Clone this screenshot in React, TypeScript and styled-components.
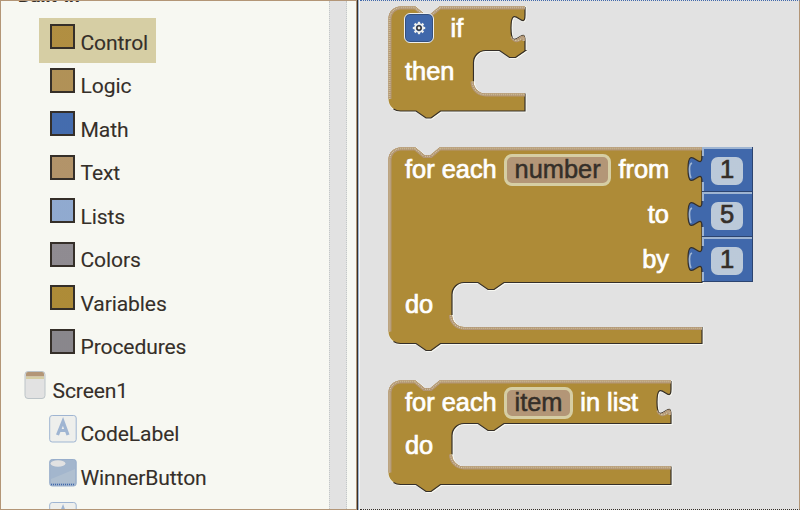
import React from "react";
import styled, { createGlobalStyle } from "styled-components";

const GOLD = "#ae8b37";
const DARK = "#352f29";
const BLUE = "#4068ab";
const SKY = "#9fb5d2";
const TAN = "#b39677";
const KHAKI = "#d6cea4";
const PAPER = "#f7f8f2";
const GREY = "#e2e2e2";

const Global = createGlobalStyle`
  body { margin: 0; overflow: hidden; }
  * { box-sizing: border-box; }
`;

const Shell = styled.div`
  width: 800px;
  height: 510px;
  display: flex;
  overflow: hidden;
  background: ${PAPER};
`;

const Sidebar = styled.aside`
  width: 329px;
  height: 510px;
  overflow: hidden;
  border: 1px solid ${TAN};
  border-right: 0;
  background: ${PAPER};
`;

const Tree = styled.ul`
  list-style: none;
  margin: -27px 0 0;
  padding: 0;
`;

const Item = styled.li<{ $level: number; $selected?: boolean }>`
  display: flex;
  align-items: flex-start;
  width: max-content;
  height: ${(p) => (p.$selected ? 45 : 43.5)}px;
  margin-bottom: ${(p) => (p.$selected ? -1.5 : 0)}px;
  margin-left: ${(p) => (p.$level === 2 ? 38 : p.$level === 1 ? 10 : 0)}px;
  padding: 0 8px 0 10px;
  background: ${(p) => (p.$selected ? KHAKI : "transparent")};
`;

const IconBox = styled.span<{ $narrow?: boolean }>`
  width: ${(p) => (p.$narrow ? 28 : 31)}px;
  height: 43px;
  flex: none;
  svg { display: block; }
`;

const Label = styled.span<{ $indent?: number }>`
  margin-left: ${(p) => p.$indent ?? 0.5}px;
  padding-top: 12.4px;
  font: 400 21.1px/26px Roboto, sans-serif;
  letter-spacing: -0.12px;
  color: ${DARK};
  -webkit-text-stroke: 0.1px ${DARK};
  white-space: nowrap;
`;

const Heading = styled(Label)`
  padding-top: 9px;
  font-size: 19px;
  font-weight: 700;
`;

const Swatch = styled.span<{ $fill: string; $dot: string }>`
  display: block;
  width: 25px;
  height: 25px;
  margin: 6.5px 0 0 1px;
  border: 2px solid ${DARK};
  background: radial-gradient(${(p) => p.$dot} 0.6px, transparent 0.8px) 0 0 / 2px 2px, ${(p) => p.$fill};
`;

const Scrollbar = styled.div`
  width: 27px;
  border-top: 1px solid ${TAN};
  border-bottom: 1px solid ${TAN};
  &::before {
    content: "";
    box-sizing: border-box;
    display: block;
    width: 18px;
    height: 100%;
    background: ${GREY};
    border: 1px dotted #c3c8c8;
    border-width: 0 1px;
  }
`;

const Divider = styled.div`
  width: 4px;
  background: linear-gradient(90deg, ${TAN} 1px, ${DARK} 1px 2px, ${SKY} 2px 3px, ${PAPER} 3px);
`;

const Workspace = styled.main`
  position: relative;
  width: 440px;
  background: ${GREY};
  border-top: 1px dotted ${BLUE};
  border-bottom: 1px dotted ${DARK};
  border-right: 1px solid ${TAN};
`;

const BlockBox = styled.section<{ $top: number; $w: number; $h: number }>`
  position: absolute;
  left: 28px;
  top: ${(p) => p.$top - 1}px;
  width: ${(p) => p.$w}px;
  height: ${(p) => p.$h}px;
`;

const Outline = styled.svg`
  position: absolute;
  left: 0;
  top: 0;
  overflow: visible;
`;

const Content = styled.div`
  position: relative;
  padding-left: 17px;
`;

const Line = styled.div<{ $h: number; $end?: boolean; $w?: number }>`
  display: flex;
  align-items: center;
  justify-content: ${(p) => (p.$end ? "flex-end" : "flex-start")};
  gap: 7.6px;
  width: ${(p) => (p.$w ? `${p.$w}px` : "auto")};
  height: ${(p) => p.$h}px;
  padding-bottom: 1px;
  font: 25.4px/30px "Liberation Sans", Arial, sans-serif;
  color: #fff;
  -webkit-text-stroke: 0.7px #fff;
  white-space: nowrap;
`;

const NameField = styled.span`
  height: 32px;
  margin-top: 2px;
  padding: 0 7.2px;
  border: 3px solid ${KHAKI};
  border-radius: 8px;
  background: ${TAN};
  color: ${DARK};
  line-height: 24px;
  -webkit-text-stroke: 0.5px ${DARK};
`;

const Mutator = styled.span`
  display: grid;
  place-items: center;
  width: 30px;
  height: 30px;
  margin: 1px 9px 0 -1px;
  border: 1.5px solid #eef0ee;
  border-radius: 6px;
  background: ${BLUE};
  box-shadow: inset 0 0 0 1px #34507f;
`;

const Numbers = styled.div`
  position: absolute;
  left: 314px;
  top: 0;
  width: 51px;
`;

const NumberBlock = styled.div`
  position: relative;
  display: grid;
  place-items: center;
  height: 45px;
  background: ${BLUE};
  border: 1px solid #2c4470;
  border-width: 0 1px 1px 0;
  box-shadow: inset 2px 2px 0 ${SKY};
`;

const NumberField = styled.span`
  width: 32px;
  height: 28px;
  margin-top: 3px;
  border-radius: 7px;
  background: radial-gradient(#cfd8e0 0.6px, transparent 0.8px) 0 0 / 2px 2px, #a9bcd3;
  color: ${DARK};
  font: 25.5px/25px "Liberation Sans", Arial, sans-serif;
  text-align: center;
  -webkit-text-stroke: 0.7px ${DARK};
`;

const Plug = styled.svg`
  position: absolute;
  left: -15px;
  top: 8px;
`;

interface Shape {
  id: string;
  w: number;
  h: number;
  cavX: number;
  cavTop: number;
  cavBottom: number;
  socket?: boolean;
}

const SOCKET = "V9 c0,17.5 -14,-14 -14,13 s14,-4.4 14,13";

function BlockShape({ id, w, h, cavX, cavTop, cavBottom, socket }: Shape) {
  const top = `M0.5,${h - 12} V12.5 A12,12 0 0 1 12.5,0.5 H27.5 l9,7.5 h6 l9,-7.5 H${w}`;
  const right = `${socket ? SOCKET : ""} V${cavTop}`;
  const cavity = `H${cavX + 52} l-10,7 h-6 l-10,-7 h-14 a12,12 0 0 0 -12,12 V${cavBottom - 12}`;
  const lower = `a12,12 0 0 0 12,12 H${w}`;
  const bottom = `V${h} H52.5 l-9.5,7 h-5 l-10,-7 H12.5`;
  const d = `${top} ${right} ${cavity} ${lower} ${bottom} a12,12 0 0 1 -12,-12 z`;
  const lit = [top, `M${cavX},${cavBottom - 12} ${lower}`];
  if (socket) lit.push(`M${w - 12},30 Q${w - 9},36 ${w - 4},31 Q${w},29 ${w},35`);
  return (
    <Outline width={w} height={h + 8}>
      <clipPath id={id}>
        <path d={d} />
      </clipPath>
      <path d={d} fill={GOLD} stroke={PAPER} strokeWidth="1.6" transform="translate(.8 .8)" />
      <path d={d} fill={GOLD} />
      <g fill="none" stroke={DARK} strokeWidth="1.2">
        <path d={`M${w},1 ${right} ${cavity}`} />
        <path d={`M${w},${cavBottom} ${bottom} q-4,0 -7,-2`} />
      </g>
      <g fill="none" clipPath={`url(#${id})`}>
        {lit.map((p) => (
          <g key={p}>
            <path d={p} stroke={TAN} strokeWidth="6" />
            <path d={p} stroke={KHAKI} strokeWidth="3.6" strokeDasharray="1 1" />
            <path d={p} stroke={TAN} strokeWidth="1.6" />
          </g>
        ))}
      </g>
    </Outline>
  );
}

function Gear() {
  return (
    <svg width="16" height="16" viewBox="-8 -8 16 16">
      {[0, 45, 90, 135, 180, 225, 270, 315].map((a) => (
        <rect key={a} x="-1.1" y="-6.2" width="2.2" height="2.2" fill="#eef0ee" transform={`rotate(${a})`} />
      ))}
      <circle r="4" fill={BLUE} stroke="#eef0ee" strokeWidth="1.7" />
      <circle r="2.7" fill={DARK} />
      <circle r="1.4" fill="#eef0ee" />
    </svg>
  );
}

function ScreenIcon() {
  return (
    <svg width="26" height="40">
      <rect x="4" y="5.5" width="20" height="27" rx="3" fill={GREY} stroke="#bcc4c8" />
      <path d="M5,10.5 V8 q0,-2 2,-2 h14 q2,0 2,2 v2.5z" fill={TAN} />
      <path d="M5,10.5 h18 v2.5 h-18z" fill={KHAKI} />
    </svg>
  );
}

function LabelIcon() {
  return (
    <svg width="29" height="40">
      <rect x="0.7" y="6.5" width="26.5" height="26.5" rx="2.5" fill="#eeefec" stroke={SKY} />
      <path d="M8.5,26 L14,12.5 L19,26 M10.5,21.5 H17" fill="none" stroke={SKY} strokeWidth="3.2" />
    </svg>
  );
}

function ButtonIcon() {
  return (
    <svg width="29" height="40">
      <rect x="0.7" y="6.5" width="26.5" height="26.5" rx="2.5" fill="#a3b6cd" stroke="#98aecb" />
      <path d="M2,26 Q12,22 26,16 V30 H2z" fill="#afbfd0" />
      <ellipse cx="9" cy="10.5" rx="7.5" ry="3.2" fill={GREY} />
      <path d="M2,31.5 H26" stroke={BLUE} strokeWidth="1.5" strokeDasharray="1 1" />
    </svg>
  );
}

const drawers = [
  { name: "Control", fill: "#b3924a", dot: GOLD },
  { name: "Logic", fill: "#b1935f", dot: "#b08f4e" },
  { name: "Math", fill: BLUE, dot: "#4a70b0" },
  { name: "Text", fill: "#b3956f", dot: "#b29262" },
  { name: "Lists", fill: SKY, dot: "#809dcb" },
  { name: "Colors", fill: "#a59384", dot: "#7582a0" },
  { name: "Variables", fill: GOLD, dot: GOLD },
  { name: "Procedures", fill: "#9c8e82", dot: "#737f97" },
];

export default function App() {
  return (
    <Shell>
      <Global />
      <Sidebar>
        <Tree>
          <Item $level={0}>
            <Heading $indent={7}>Built-in</Heading>
          </Item>
          {drawers.map((d) => (
            <Item key={d.name} $level={2} $selected={d.name === "Control"}>
              <IconBox>
                <Swatch $fill={d.fill} $dot={d.dot} />
              </IconBox>
              <Label>{d.name}</Label>
            </Item>
          ))}
          <Item $level={1}>
            <IconBox $narrow>
              <ScreenIcon />
            </IconBox>
            <Label $indent={3.5}>Screen1</Label>
          </Item>
          <Item $level={2}>
            <IconBox><LabelIcon /></IconBox>
            <Label>CodeLabel</Label>
          </Item>
          <Item $level={2}>
            <IconBox><ButtonIcon /></IconBox>
            <Label>WinnerButton</Label>
          </Item>
          <Item $level={2}>
            <IconBox><LabelIcon /></IconBox>
          </Item>
        </Tree>
      </Sidebar>
      <Scrollbar />
      <Divider />
      <Workspace>
        <BlockBox $top={6} $w={137} $h={113}>
          <BlockShape id="if" w={137} h={105} cavX={85.5} cavTop={44.5} cavBottom={87.5} socket />
          <Content>
            <Line $h={44}>
              <Mutator><Gear /></Mutator>
              if
            </Line>
            <Line $h={43}>then</Line>
          </Content>
        </BlockBox>
        <BlockBox $top={147} $w={366} $h={204}>
          <BlockShape id="range" w={314} h={196.5} cavX={64} cavTop={135.5} cavBottom={180} />
          <Content>
            <Line $h={45}>
              for each <NameField>number</NameField> from
            </Line>
            <Line $h={45} $end $w={264}>to</Line>
            <Line $h={45} $end $w={264}>by</Line>
            <Line $h={45}>do</Line>
          </Content>
          <Numbers>
            {["1", "5", "1"].map((n, i) => (
              <NumberBlock key={i}>
                <Plug width="18" height="30">
                  <path d="M18,1 H15 c0,17.5 -14,-14 -14,13 s14,-4.4 14,13 H18z" fill={BLUE} />
                  <path d="M15,1 c0,17.5 -14,-14 -14,13 s14,-4.4 14,13" fill="none" stroke={DARK} strokeWidth="1.2" />
                  <path d="M5,8 Q2.5,9 2.5,14 Q2.5,20 4,23" fill="none" stroke={SKY} strokeWidth="1.6" />
                </Plug>
                <NumberField>{n}</NumberField>
              </NumberBlock>
            ))}
          </Numbers>
        </BlockBox>
        <BlockBox $top={380} $w={283} $h={113}>
          <BlockShape id="list" w={283} h={104.5} cavX={64} cavTop={43.5} cavBottom={86.5} socket />
          <Content>
            <Line $h={44}>
              for each <NameField>item</NameField> in list
            </Line>
            <Line $h={43}>do</Line>
          </Content>
        </BlockBox>
      </Workspace>
    </Shell>
  );
}
